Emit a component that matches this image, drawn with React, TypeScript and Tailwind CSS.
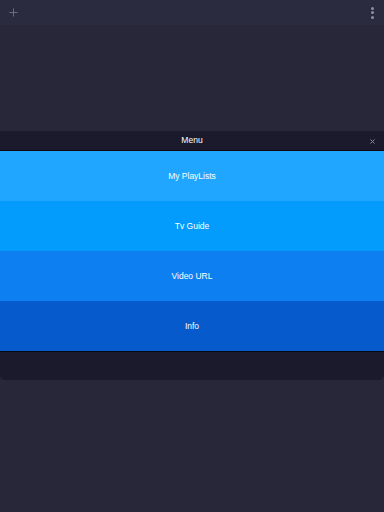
import React from "react";

export default function App() {
  const rows = [
    { label: "My PlayLists", cls: "bg-[#20a6fe]" },
    { label: "Tv Guide", cls: "bg-[#039cfd]" },
    { label: "Video URL", cls: "bg-[#0d7ff1]" },
    { label: "Info", cls: "bg-[#065acc]" },
  ];
  return (
    <div
      className="w-[384px] h-[512px] bg-[#272739] flex flex-col overflow-hidden"
      style={{ fontFamily: "'Liberation Sans', Arial, sans-serif" }}
    >
      <div className="h-[25px] bg-[#2a2b3e] flex items-center justify-between px-[9px] shrink-0">
        <svg width="9" height="9" viewBox="0 0 9 9">
          <path d="M4.5 0.5v8M0.5 4.5h8" stroke="#6b6c80" strokeWidth="1" />
        </svg>
        <div className="flex flex-col gap-[1.5px] items-center mr-[1px]">
          <span className="w-[3px] h-[3px] rounded-full bg-[#8d8ea2]" />
          <span className="w-[3px] h-[3px] rounded-full bg-[#8d8ea2]" />
          <span className="w-[3px] h-[3px] rounded-full bg-[#8d8ea2]" />
        </div>
      </div>
      <div className="h-[106px] shrink-0" />
      <div className="flex flex-col rounded-b-[5px] bg-[#1b1a2c] overflow-hidden">
        <div className="h-[20px] flex items-center justify-center relative border-b border-[#0d0c16]">
          <span className="text-[8.5px] text-white">Menu</span>
          <svg className="absolute right-[9px] top-[8px]" width="5" height="5" viewBox="0 0 5 5">
            <path d="M0.5 0.5l4 4M4.5 0.5l-4 4" stroke="#8a8a9c" strokeWidth="1" />
          </svg>
        </div>
        {rows.map((r) => (
          <div key={r.label} className={`h-[50px] flex items-center justify-center ${r.cls}`}>
            <span className="text-[8.5px] text-white pt-[1px]">{r.label}</span>
          </div>
        ))}
        <div className="h-[29px] border-t border-[#07070d]" />
      </div>
    </div>
  );
}
